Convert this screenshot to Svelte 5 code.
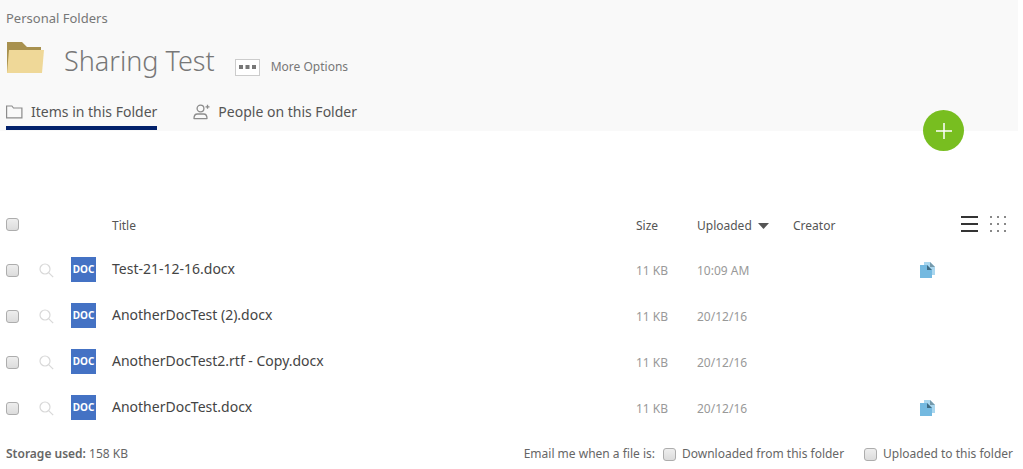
<script>
    let files = $state([
        { name: 'Test-21-12-16.docx', size: '11 KB', uploaded: '10:09 AM', versions: true, checked: false },
        { name: 'AnotherDocTest (2).docx', size: '11 KB', uploaded: '20/12/16', versions: false, checked: false },
        { name: 'AnotherDocTest2.rtf - Copy.docx', size: '11 KB', uploaded: '20/12/16', versions: false, checked: false },
        { name: 'AnotherDocTest.docx', size: '11 KB', uploaded: '20/12/16', versions: true, checked: false }
    ])
    let tab = $state('items')
    let notifyDownload = $state(false)
    let notifyUpload = $state(false)

    let allChecked = $derived(files.every((f) => f.checked))

    function toggleAll(e) {
        const on = e.currentTarget.checked
        files.forEach((f) => (f.checked = on))
    }
</script>

<div class="page">
    <header>
        <a class="crumb" href="#personal">Personal Folders</a>

        <div class="heading">
            <svg width="38" height="32" viewBox="0 0 38 32" aria-hidden="true">
                <path d="M1 0h15l5 5h14v26H1z" fill="#a8914f" />
                <path d="M3 8h35l-2 23H1z" fill="#efd898" />
            </svg>
            <h1>Sharing Test</h1>
            <button class="more">
                <span class="dots">
                    <svg width="17" height="4" viewBox="0 0 17 4" aria-hidden="true">
                        <path d="M0 0h4v4H0zM6.5 0h4v4h-4zM13 0h4v4h-4z" fill="#777" />
                    </svg>
                </span>
                More Options
            </button>
        </div>

        <nav>
            <button class:active={tab === 'items'} onclick={() => (tab = 'items')}>
                <svg width="17" height="14" viewBox="0 0 17 14" fill="none" stroke="#8c8c8c" aria-hidden="true">
                    <path d="M.6 12.9V1h5.3l1.6 2h8.4v9.9z" stroke-width="1.2" />
                </svg>
                Items in this Folder
            </button>
            <button class:active={tab === 'people'} onclick={() => (tab = 'people')}>
                <svg width="17" height="16" viewBox="0 0 17 16" fill="none" stroke="#8c8c8c" stroke-width="1.3" aria-hidden="true">
                    <circle cx="7.5" cy="4.5" r="3.4" />
                    <path d="M1 14.6c0-3.3 1.5-4.6 3.4-4.6h6.2c1.9 0 3.4 1.3 3.4 4.6z" stroke-linejoin="round" />
                    <path d="M14.5.8v4M12.5 2.8h4" />
                </svg>
                People on this Folder
            </button>
        </nav>

        <button class="add" aria-label="Add">
            <svg width="16" height="16" viewBox="0 0 16 16" stroke="#fff" stroke-width="1.5" aria-hidden="true">
                <path d="M8 0v16M0 8h16" />
            </svg>
        </button>
    </header>

    <table>
        <colgroup>
            <col class="c-check" />
            <col class="c-preview" />
            <col class="c-type" />
            <col />
            <col class="c-size" />
            <col class="c-date" />
            <col class="c-creator" />
            <col class="c-versions" />
            <col class="c-view" />
        </colgroup>
        <thead>
            <tr>
                <th><input type="checkbox" aria-label="Select all" checked={allChecked} onchange={toggleAll} /></th>
                <th></th>
                <th></th>
                <th class="label">Title</th>
                <th class="label">Size</th>
                <th class="label">
                    <button class="sort">
                        Uploaded
                        <svg width="11" height="6" viewBox="0 0 11 6" aria-hidden="true"><path d="M0 0h11L5.500 6z" fill="#555" /></svg>
                    </button>
                </th>
                <th class="label">Creator</th>
                <th></th>
                <th>
                    <div class="views">
                        <button aria-label="List view">
                            <svg width="17" height="18" viewBox="0 0 17 18" stroke="#333" stroke-width="2" aria-hidden="true">
                                <path d="M0 2h17M0 9h17M0 16h17" />
                            </svg>
                        </button>
                        <button aria-label="Grid view">
                            <svg width="18" height="18" viewBox="0 0 18 18" fill="#888" aria-hidden="true">
                                {#each [1, 8, 15] as y}
                                    {#each [1, 8, 15] as x}
                                        <rect {x} {y} width="2" height="2" />
                                    {/each}
                                {/each}
                            </svg>
                        </button>
                    </div>
                </th>
            </tr>
        </thead>
        <tbody>
            {#each files as file}
                <tr>
                    <td><input type="checkbox" aria-label="Select {file.name}" bind:checked={file.checked} /></td>
                    <td>
                        <button aria-label="Preview {file.name}">
                            <svg width="15" height="15" viewBox="0 0 15 15" fill="none" stroke="#d8d8d8" stroke-width="1.2" aria-hidden="true">
                                <circle cx="6" cy="6" r="5" />
                                <path d="M9.6 9.6l4.6 4.6" />
                            </svg>
                        </button>
                    </td>
                    <td><span class="doc">DOC</span></td>
                    <td><a class="name" href="#file">{file.name}</a></td>
                    <td class="meta">{file.size}</td>
                    <td class="meta">{file.uploaded}</td>
                    <td></td>
                    <td>
                        {#if file.versions}
                            <button aria-label="Versions of {file.name}">
                                <svg width="15" height="16" viewBox="0 0 15 16" aria-hidden="true">
                                    <path d="M4 0h6l5 5v8H4z" fill="#a9d6ee" />
                                    <path d="M10 0l5 5h-5z" fill="#7599ab" />
                                    <path d="M0 3h7l5 5v8H0z" fill="#74b9e0" />
                                    <path d="M7 3l5 5H7z" fill="#3f6a82" />
                                </svg>
                            </button>
                        {/if}
                    </td>
                    <td></td>
                </tr>
            {/each}
        </tbody>
    </table>

    <footer>
        <div><strong>Storage used:</strong> 158 KB</div>
        <div class="notify">
            <span>Email me when a file is:</span>
            <label><input type="checkbox" bind:checked={notifyDownload} />Downloaded from this folder</label>
            <label><input type="checkbox" bind:checked={notifyUpload} />Uploaded to this folder</label>
        </div>
    </footer>
</div>

<style>
    :global(body) {
        margin: 0;
        background: #fff;
    }
    .page {
        margin-right: 5px;
        font-family: "Noto Sans", "Open Sans", sans-serif;
        font-size: 12px;
        line-height: 16px;
        color: #555;
    }
    button {
        padding: 0;
        border: 0;
        background: none;
        font: inherit;
        color: inherit;
        cursor: pointer;
    }
    a {
        color: inherit;
        text-decoration: none;
    }
    svg {
        display: block;
        flex: none;
    }
    header {
        position: relative;
        padding: 8px 6px 0;
        background: #f9f9f9;
    }
    .crumb {
        display: block;
        font-size: 13px;
        line-height: 20px;
        color: #777;
    }
    .heading {
        display: flex;
        align-items: center;
        height: 60px;
    }
    h1 {
        margin: 6px 20px 0;
        font-size: 27px;
        line-height: 40px;
        font-weight: 300;
        color: #777;
    }
    .more {
        display: flex;
        align-items: center;
        gap: 11px;
        margin-top: 18px;
        color: #777;
    }
    .dots {
        display: flex;
        align-items: center;
        justify-content: center;
        width: 23px;
        height: 15px;
        border: 1px solid #ccc;
        background: #fff;
    }
    nav {
        display: flex;
        gap: 36px;
        padding-bottom: 1px;
    }
    nav button {
        display: flex;
        align-items: center;
        gap: 8px;
        height: 42px;
        padding-top: 10px;
        border-bottom: 4px solid transparent;
        font-size: 14px;
    }
    nav .active {
        border-color: #02216b;
    }
    .add {
        position: absolute;
        right: 54px;
        bottom: -20px;
        display: flex;
        align-items: center;
        justify-content: center;
        width: 41px;
        height: 41px;
        border-radius: 50%;
        background: #78be20;
    }
    table {
        width: 100%;
        margin-top: 71px;
        border-collapse: collapse;
        table-layout: fixed;
    }
    .c-check {
        width: 39px;
    }
    .c-preview {
        width: 32px;
    }
    .c-type {
        width: 41px;
    }
    .c-size {
        width: 61px;
    }
    .c-date {
        width: 96px;
    }
    .c-creator {
        width: 127px;
    }
    .c-versions {
        width: 41px;
    }
    .c-view {
        width: 57px;
    }
    th,
    td {
        padding: 0;
        text-align: left;
        font-weight: 400;
    }
    th:first-child,
    td:first-child {
        padding-left: 6px;
    }
    thead tr {
        height: 44px;
    }
    tbody tr {
        height: 46px;
    }
    .label {
        padding-top: 4px;
    }
    td button {
        margin-top: 6px;
    }
    input {
        appearance: none;
        display: block;
        flex: none;
        width: 13px;
        height: 13px;
        margin: 0;
        border: 1px solid #adadad;
        border-radius: 3px;
        background: linear-gradient(#eee, #dcdcdc);
    }
    td input {
        margin-top: 3px;
    }
    input:checked {
        background: #02216b;
    }
    .sort {
        display: flex;
        align-items: center;
        gap: 6px;
    }
    .views {
        display: flex;
        gap: 11px;
        padding-bottom: 1px;
    }
    .doc {
        display: block;
        width: 25px;
        background: #4472c4;
        color: #fff;
        font-size: 10px;
        font-weight: 700;
        line-height: 25px;
        text-align: center;
    }
    .name {
        font-size: 14px;
        color: #444;
    }
    .meta {
        padding-top: 4px;
        color: #999;
    }
    footer {
        display: flex;
        justify-content: space-between;
        padding: 16px 5px 6px 6px;
        color: #666;
    }
    strong {
        font-weight: 600;
    }
    .notify,
    label {
        display: flex;
        align-items: center;
    }
    .notify label:last-child {
        margin-left: 20px;
    }
    label input {
        margin: 0 6px 0 8px;
    }
    .notify label:last-child input {
        margin-left: 0;
    }
</style>
